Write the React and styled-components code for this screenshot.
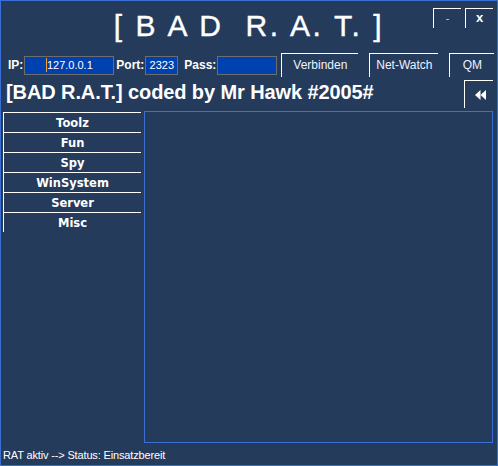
import styled, { createGlobalStyle } from 'styled-components';

const GlobalStyle = createGlobalStyle`
  html, body {
    margin: 0;
    padding: 0;
    background: #243b5b;
  }
`;

const menuItems = ["Toolz", "Fun", "Spy", "WinSystem", "Server", "Misc"];

const App = () => {
  return <Window>
    <GlobalStyle />
    <Header>
      <span />
      <Title>[ B A D&nbsp; R. A. T. ]</Title>
      <Controls>
        <CtrlButton $dim>-</CtrlButton>
        <CtrlButton>x</CtrlButton>
      </Controls>
    </Header>

    <ConnectBar>
      <Label>IP:</Label>
      <Field $w={90}><Caret />127.0.0.1</Field>
      <Label $ml={2}>Port:</Label>
      <Field $w={33}>2323</Field>
      <Label $ml={6}>Pass:</Label>
      <Field $w={60} />
      <TabButton $w={77} $ml={4}>Verbinden</TabButton>
      <TabButton $w={69} $ml={11}>Net-Watch</TabButton>
      <TabButton $w={45} $ml={11}>QM</TabButton>
    </ConnectBar>

    <HeadingRow>
      <Heading>[BAD R.A.T.] coded by Mr Hawk #2005#</Heading>
      <BackButton>
        <svg width="11" height="10" viewBox="0 0 11 10">
          <polygon points="5.5,0 5.5,10 0,5" fill="#fff" />
          <polygon points="11,0 11,10 5.5,5" fill="#fff" />
        </svg>
      </BackButton>
    </HeadingRow>

    <Body>
      <Menu>
        {menuItems.map((item) => <MenuItem key={item}>{item}</MenuItem>)}
      </Menu>
      <Panel />
    </Body>

    <Status>RAT aktiv --&gt; Status: Einsatzbereit</Status>
  </Window>;
};

export default App;

const Window = styled.div`
  box-sizing: border-box;
  width: 498px;
  height: 466px;
  border: 1px solid #3a6fd8;
  background: #243b5b;
  display: flex;
  flex-direction: column;
  padding: 7px 0 3px 0;
  font-family: "Liberation Sans", Arial, sans-serif;
  color: #ffffff;
`;

const Header = styled.div`
  display: grid;
  grid-template-columns: 1fr auto 1fr;
  height: 36px;
`;

const Title = styled.div`
  font-size: 30px;
  line-height: 36px;
  letter-spacing: 2.6px;
  white-space: nowrap;
  -webkit-text-stroke: 0.4px #ffffff;
`;

const Controls = styled.div`
  justify-self: end;
  align-self: start;
  display: flex;
  gap: 4px;
  padding-right: 4px;
`;

const CtrlButton = styled.div`
  box-sizing: border-box;
  width: 28px;
  height: 20px;
  border-top: 1px solid #ffffff;
  border-left: 1px solid #ffffff;
  display: flex;
  justify-content: center;
  align-items: center;
  font-size: ${(p) => (p.$dim ? '11px' : '13px')};
  font-weight: ${(p) => (p.$dim ? 'normal' : 'bold')};
  color: ${(p) => (p.$dim ? '#c8cfdc' : '#ffffff')};
  padding-bottom: 2px;
`;

const ConnectBar = styled.div`
  display: flex;
  align-items: center;
  height: 24px;
  margin-top: 9px;
  padding-left: 7px;
`;

const Label = styled.span`
  font-size: 12px;
  font-weight: bold;
  margin-left: ${(p) => p.$ml || 0}px;
  margin-right: 1px;
`;

const Field = styled.div`
  box-sizing: border-box;
  width: ${(p) => p.$w}px;
  height: 19px;
  background: #0041b0;
  border: 1px solid #6d6d6d;
  display: flex;
  justify-content: center;
  align-items: center;
  font-size: 11px;
  color: #ffffff;
`;

const Caret = styled.span`
  display: inline-block;
  width: 1px;
  height: 14px;
  background: #f0a030;
`;

const TabButton = styled.div`
  box-sizing: border-box;
  width: ${(p) => p.$w}px;
  height: 24px;
  margin-left: ${(p) => p.$ml || 0}px;
  border-top: 1px solid #ffffff;
  border-left: 1px solid #ffffff;
  display: flex;
  justify-content: center;
  align-items: center;
  font-size: 12px;
  color: #eef2ff;
  padding-bottom: 1px;
`;

const HeadingRow = styled.div`
  display: flex;
  justify-content: space-between;
  align-items: flex-start;
  height: 28px;
  margin-top: 3px;
  padding: 0 4px 0 5px;
`;

const Heading = styled.h1`
  margin: 0;
  font-size: 20px;
  line-height: 24px;
  font-weight: bold;
  white-space: nowrap;
  letter-spacing: -0.1px;
`;

const BackButton = styled.div`
  box-sizing: border-box;
  width: 29px;
  height: 28px;
  border-top: 1px solid #ffffff;
  border-left: 1px solid #ffffff;
  display: flex;
  justify-content: center;
  align-items: center;
  padding-left: 2px;
`;

const Body = styled.div`
  flex: 1;
  display: flex;
  align-items: flex-start;
  gap: 3px;
  margin-top: 3px;
  padding: 0 4px 0 2px;
`;

const Menu = styled.div`
  width: 138px;
  margin-top: 1px;
  display: flex;
  flex-direction: column;
`;

const MenuItem = styled.div`
  box-sizing: border-box;
  height: 20px;
  border-top: 1px solid #ffffff;
  border-left: 1px solid #ffffff;
  display: flex;
  justify-content: center;
  align-items: center;
  font-family: "DejaVu Sans", Verdana, sans-serif;
  font-size: 11.5px;
  font-weight: bold;
  color: #ffffff;
`;

const Panel = styled.div`
  box-sizing: border-box;
  flex: 1;
  align-self: stretch;
  border: 1px solid #3a6fd8;
`;

const Status = styled.div`
  margin-top: 6px;
  padding-left: 2px;
  font-size: 11px;
  line-height: 13px;
  letter-spacing: -0.15px;
  color: #ffffff;
`;
